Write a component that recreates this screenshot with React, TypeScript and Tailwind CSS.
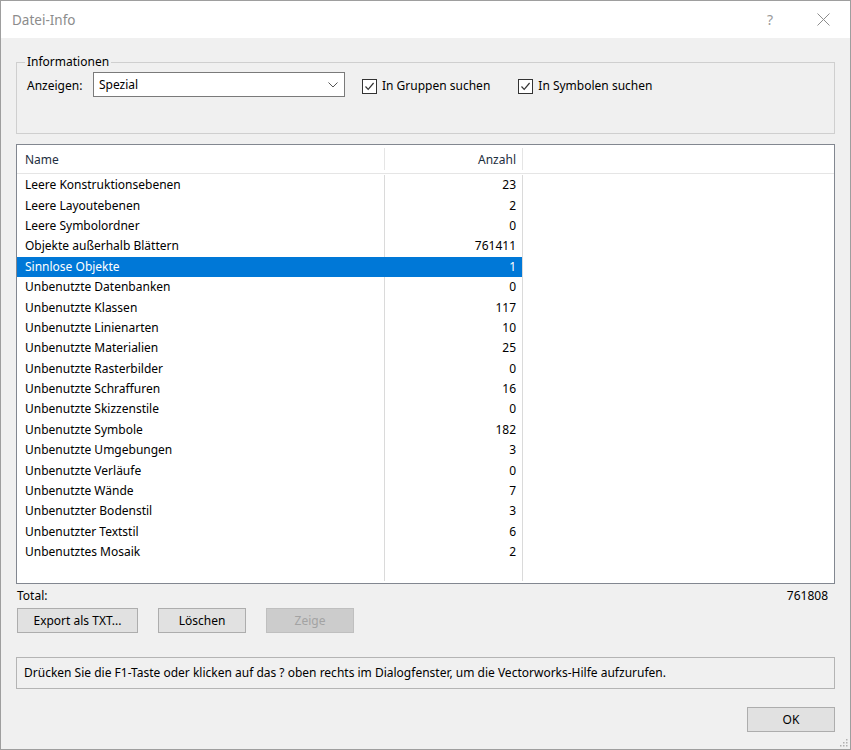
import React from 'react';

const rows: { name: string; count: string }[] = [
  { name: 'Leere Konstruktionsebenen', count: '23' },
  { name: 'Leere Layoutebenen', count: '2' },
  { name: 'Leere Symbolordner', count: '0' },
  { name: 'Objekte außerhalb Blättern', count: '761411' },
  { name: 'Sinnlose Objekte', count: '1' },
  { name: 'Unbenutzte Datenbanken', count: '0' },
  { name: 'Unbenutzte Klassen', count: '117' },
  { name: 'Unbenutzte Linienarten', count: '10' },
  { name: 'Unbenutzte Materialien', count: '25' },
  { name: 'Unbenutzte Rasterbilder', count: '0' },
  { name: 'Unbenutzte Schraffuren', count: '16' },
  { name: 'Unbenutzte Skizzenstile', count: '0' },
  { name: 'Unbenutzte Symbole', count: '182' },
  { name: 'Unbenutzte Umgebungen', count: '3' },
  { name: 'Unbenutzte Verläufe', count: '0' },
  { name: 'Unbenutzte Wände', count: '7' },
  { name: 'Unbenutzter Bodenstil', count: '3' },
  { name: 'Unbenutzter Textstil', count: '6' },
  { name: 'Unbenutztes Mosaik', count: '2' },
];

const SELECTED = 4;

const Checkbox: React.FC<{ label: string; className?: string }> = ({ label, className }) => (
  <div className={`flex items-center ${className ?? ''}`}>
    <span className="flex h-[15px] w-[15px] items-center justify-center border border-[#333] bg-white">
      <svg width="11" height="11" viewBox="0 0 11 11" aria-hidden>
        <polyline points="1.5,5.5 4.2,8.4 9.6,2" fill="none" stroke="#333" strokeWidth="1.2" />
      </svg>
    </span>
    <span className="ml-[5px]">{label}</span>
  </div>
);

const Button: React.FC<{ label: string; width: string; disabled?: boolean; className?: string }> = ({
  label,
  width,
  disabled,
  className,
}) => (
  <button
    type="button"
    className={`flex h-[25px] items-center justify-center border ${width} ${
      disabled ? 'border-[#bfbfbf] bg-[#cccccc] text-[#a3a3a3]' : 'border-[#adadad] bg-[#e1e1e1] text-black'
    } ${className ?? ''}`}
  >
    {label}
  </button>
);

export default function App() {
  return (
    <div
      className="flex h-[750px] w-[851px] flex-col border border-[#9e9e9e] bg-[#f0f0f0] text-[12px] leading-[16px] text-black"
      style={{ fontFamily: '"Noto Sans", "Liberation Sans", sans-serif' }}
    >
      {/* title bar */}
      <div className="flex h-[37px] items-center bg-white pl-[11px] pr-[20px]">
        <span className="text-[13.5px] text-[#8c8c8c]">Datei-Info</span>
        <span className="ml-auto text-[14px] text-[#9a9a9a]">?</span>
        <svg className="ml-[44px]" width="13" height="13" viewBox="0 0 13 13" aria-hidden>
          <path d="M0.5 0.5 L12.5 12.5 M12.5 0.5 L0.5 12.5" stroke="#8c8c8c" strokeWidth="1" />
        </svg>
      </div>

      <div className="flex flex-1 flex-col px-[15px]">
        {/* group box */}
        <div className="relative mt-[24px] h-[72px] border border-[#cfcfcf] pl-[10px] pt-[9px]">
          <span className="absolute left-[8px] top-[-9px] bg-[#f0f0f0] px-[2px]">Informationen</span>
          <div className="flex items-center">
            <span className="mt-[2px] w-[66px]">Anzeigen:</span>
            <div className="flex h-[25px] w-[252px] items-center justify-between border border-[#7a7a7a] bg-white pl-[5px] pr-[6px]">
              <span>Spezial</span>
              <svg width="10" height="6" viewBox="0 0 10 6" aria-hidden>
                <polyline points="0.5,0.5 5,5 9.5,0.5" fill="none" stroke="#555" strokeWidth="1" />
              </svg>
            </div>
            <Checkbox label="In Gruppen suchen" className="ml-[17px] mt-[3px]" />
            <Checkbox label="In Symbolen suchen" className="ml-[28px] mt-[3px]" />
          </div>
        </div>

        {/* list view */}
        <div className="mt-[10px] flex h-[440px] flex-col border border-[#828790] bg-white">
          <div className="flex h-[29px] border-b border-[#e5e5e5] text-[#1e2e40]">
            <div className="flex w-[367px] items-center pl-[8px] pt-[2px]">Name</div>
            <div className="my-[3px] w-px bg-[#e5e5e5]" />
            <div className="flex w-[137px] items-center justify-end pr-[6px] pt-[2px]">Anzahl</div>
            <div className="my-[3px] w-px bg-[#e5e5e5]" />
          </div>
          <div className="flex flex-1 flex-col pt-[1px]">
            {rows.map((row, i) => {
              const sel = i === SELECTED;
              return (
                <div key={row.name} className="flex h-[20.4px]">
                  <div
                    className={`flex w-[367px] items-center pl-[8px] ${sel ? 'bg-[#0078d7] text-white' : ''}`}
                  >
                    {row.name}
                  </div>
                  <div className={`w-px ${sel ? 'bg-[#0078d7]' : 'bg-[#dadada]'}`} />
                  <div
                    className={`flex w-[137px] items-center justify-end pr-[6px] ${
                      sel ? 'bg-[#0078d7] text-white' : ''
                    }`}
                  >
                    {row.count}
                  </div>
                  <div className="w-px bg-[#dadada]" />
                </div>
              );
            })}
            <div className="mb-[2px] flex flex-1">
              <div className="w-[367px]" />
              <div className="w-px bg-[#dadada]" />
              <div className="w-[137px]" />
              <div className="w-px bg-[#dadada]" />
            </div>
          </div>
        </div>

        {/* total */}
        <div className="mt-[3px] flex h-[17px] items-center justify-between pl-[1px] pr-[7px]">
          <span>Total:</span>
          <span>761808</span>
        </div>

        {/* buttons */}
        <div className="mt-[4px] flex pl-[1px]">
          <Button label="Export als TXT..." width="w-[121px]" />
          <Button label="Löschen" width="w-[88px]" className="ml-[20px]" />
          <Button label="Zeige" width="w-[88px]" disabled className="ml-[20px]" />
        </div>

        {/* help text */}
        <div className="mt-[24px] flex h-[32px] items-center border border-[#b4b4b4] pl-[7px]">
          Drücken Sie die F1-Taste oder klicken auf das ? oben rechts im Dialogfenster, um die Vectorworks-Hilfe aufzurufen.
        </div>

        {/* ok */}
        <div className="mt-[18px] flex justify-end">
          <Button label="OK" width="w-[88px]" />
        </div>

        <div className="mt-auto flex justify-end pb-[2px] pr-0">
          <svg className="mr-[-13px]" width="9" height="9" viewBox="0 0 9 9" aria-hidden>
            <rect x="7" y="1" width="1.5" height="1.5" fill="#b0b0b0" />
            <rect x="4" y="4" width="1.5" height="1.5" fill="#b0b0b0" />
            <rect x="7" y="4" width="1.5" height="1.5" fill="#b0b0b0" />
            <rect x="1" y="7" width="1.5" height="1.5" fill="#b0b0b0" />
            <rect x="4" y="7" width="1.5" height="1.5" fill="#b0b0b0" />
            <rect x="7" y="7" width="1.5" height="1.5" fill="#b0b0b0" />
          </svg>
        </div>
      </div>
    </div>
  );
}
